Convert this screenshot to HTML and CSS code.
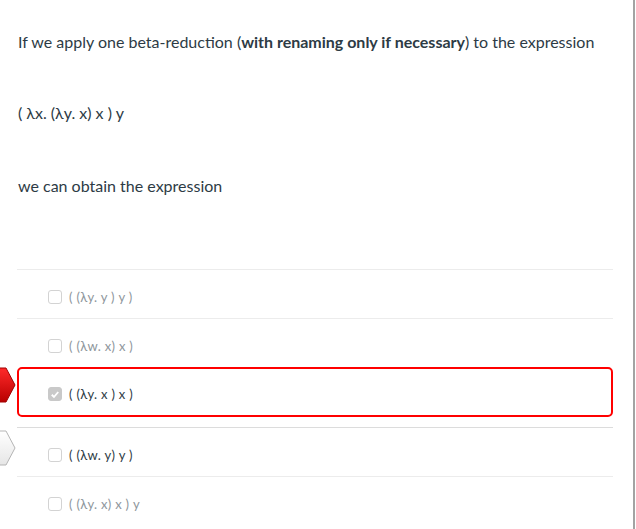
FILE: index.html
```html
<!DOCTYPE html>
<html>
<head>
<meta charset="utf-8">
<link rel="stylesheet" href="styles.css">
</head>
<body>
<div class="page">
  <div class="question">
    <p class="q-line first">If we apply one beta-reduction (<strong>with renaming only if necessary</strong>) to the expression</p>
    <p class="q-line expr">( λx. (λy. x) x ) y</p>
    <p class="q-line obtain">we can obtain the expression</p>
  </div>
  <div class="answers">
    <div class="answer dim"><span class="box"></span><span class="label">( (λy. y ) y )</span></div>
    <div class="answer dim"><span class="box"></span><span class="label">( (λw. x) x )</span></div>
    <div class="answer selected">
      <span class="marker marker-red"><svg width="16" height="36" viewBox="0 0 16 36"><defs><linearGradient id="rg" x1="0" y1="0" x2="0" y2="1"><stop offset="0" stop-color="#ff2a2a"/><stop offset="1" stop-color="#b80000"/></linearGradient></defs><path d="M-2 1 H6 L15 18 L6 35 H-2 Z" fill="url(#rg)" stroke="#a00000" stroke-width="1"/></svg></span>
      <span class="box checked"><svg width="13" height="13" viewBox="0 0 13 13"><path d="M3 6.8 L5.4 9.2 L10 3.8" fill="none" stroke="#fff" stroke-width="2"/></svg></span><span class="label">( (λy. x ) x )</span>
    </div>
    <div class="answer normal">
      <span class="marker marker-white"><svg width="16" height="36" viewBox="0 0 16 36"><defs><linearGradient id="wg" x1="0" y1="0" x2="0" y2="1"><stop offset="0" stop-color="#ffffff"/><stop offset="1" stop-color="#e6e6e6"/></linearGradient></defs><path d="M-2 1 H6 L15 18 L6 35 H-2 Z" fill="url(#wg)" stroke="#b5b5b5" stroke-width="1"/></svg></span>
      <span class="box"></span><span class="label">( (λw. y) y )</span>
    </div>
    <div class="answer dim"><span class="box"></span><span class="label">( (λy. x) x ) y</span></div>
  </div>
</div>
</body>
</html>
```
FILE: styles.css
```css
html, body {
  margin: 0;
  padding: 0;
  background: #fff;
}
.page {
  width: 635px;
  height: 529px;
  border-right: 2px solid #a3a3a3;
  box-sizing: border-box;
  font-family: Lato, "Open Sans", sans-serif;
  color: #2d3b45;
  position: relative;
  overflow: hidden;
}
.question {
  padding: 32px 0 0 18px;
}
.q-line {
  margin: 0;
  font-size: 16px;
  line-height: 20px;
}
.q-line strong {
  font-weight: 700;
}
.expr {
  margin-top: 51px;
}
.obtain {
  margin-top: 53px;
}
.answers {
  margin: 73px 0 0 17px;
  width: 596px;
}
.answer {
  position: relative;
  display: flex;
  align-items: center;
  height: 49px;
  border-top: 1px solid #ececec;
  box-sizing: border-box;
  padding-left: 31px;
  padding-top: 6px;
  font-size: 13px;
}
.answer.dim {
  color: #8e969c;
}
.answer.normal {
  color: #2d3b45;
  border-top-color: #dcdcdc;
}
.answer.selected {
  border: 2px solid #ff0000;
  border-radius: 5px;
  height: 50px;
  margin-bottom: 10px;
  padding-left: 29px;
  padding-top: 4px;
  color: #2d3b45;
}
.box {
  width: 12px;
  height: 12px;
  border: 1px solid #d3d3d3;
  border-radius: 3px;
  background: #fff;
  margin-right: 7px;
  display: inline-flex;
  align-items: center;
  justify-content: center;
  flex: none;
}
.box.checked {
  background: #c9c9c9;
  border-color: #c9c9c9;
}
.box.checked svg {
  display: block;
}
.label {
  letter-spacing: 0.3px;
}
.marker {
  position: absolute;
  left: -19px;
  top: 50%;
  margin-top: -25px;
  width: 16px;
  height: 36px;
}
.marker svg {
  display: block;
}
.marker-white {
  left: -17px;
  margin-top: -22px;
}
```
